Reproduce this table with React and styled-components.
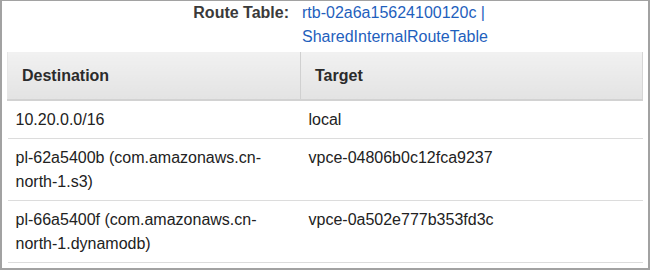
import styled, { createGlobalStyle } from "styled-components";

const GlobalStyle = createGlobalStyle`
  html, body {
    margin: 0;
    padding: 0;
    background: #ffffff;
  }

  body {
    font-family: "Liberation Sans", Arial, Helvetica, sans-serif;
    font-size: 16px;
    color: #222;
  }
`;

const Frame = styled.div`
  width: 650px;
  height: 270px;
  box-sizing: border-box;
  border: 2px solid #a2a2a2;
  border-top-width: 1px;
  padding: 0 5px;
  background: #fff;
  overflow: hidden;
`;

const InfoRow = styled.div`
  display: grid;
  grid-template-columns: 282px 1fr;
  column-gap: 13px;
  line-height: 24px;
  margin-bottom: 3px;
`;

const Label = styled.div`
  text-align: right;
  font-weight: 700;
  color: #3a3a3a;
`;

const Value = styled.a`
  display: block;
  max-width: 200px;
  color: #1f5fbd;
  text-decoration: none;
`;

const Table = styled.table`
  width: 100%;
  border-collapse: collapse;
  table-layout: fixed;
`;

const HeadCell = styled.th`
  height: 48px;
  padding: 0 14px;
  text-align: left;
  font-weight: 700;
  color: #2b2b2b;
  background: linear-gradient(#f1f1f1, #e3e3e3);
  border-bottom: 2px solid #d2d2d2;
  border-left: ${(p) => (p.$first ? "1px solid #e6e6e6" : "1px solid #fafafa")};
  border-right: ${(p) => (p.$last ? "1px solid #d6d6d6" : "1px solid #d0d0d0")};
  width: ${(p) => p.$width || "auto"};
  box-sizing: border-box;
`;

const Cell = styled.td`
  padding: 7px 8px 6px;
  line-height: 24px;
  vertical-align: top;
  color: #222;
  border-bottom: 1px solid #dcdcdc;
`;

const routes = [
  { destination: "10.20.0.0/16", target: "local" },
  {
    destination: "pl-62a5400b (com.amazonaws.cn-north-1.s3)",
    target: "vpce-04806b0c12fca9237",
  },
  {
    destination: "pl-66a5400f (com.amazonaws.cn-north-1.dynamodb)",
    target: "vpce-0a502e777b353fd3c",
  },
];

const App = () => {
  return (
    <>
      <GlobalStyle />
      <Frame>
        <InfoRow>
          <Label>Route Table:</Label>
          <Value href="#">rtb-02a6a15624100120c | SharedInternalRouteTable</Value>
        </InfoRow>

        <Table>
          <thead>
            <tr>
              <HeadCell $first $width="293px">
                Destination
              </HeadCell>
              <HeadCell $last>Target</HeadCell>
            </tr>
          </thead>
          <tbody>
            {routes.map((r) => (
              <tr key={r.destination}>
                <Cell>{r.destination}</Cell>
                <Cell>{r.target}</Cell>
              </tr>
            ))}
          </tbody>
        </Table>
      </Frame>
    </>
  );
};

export default App;
